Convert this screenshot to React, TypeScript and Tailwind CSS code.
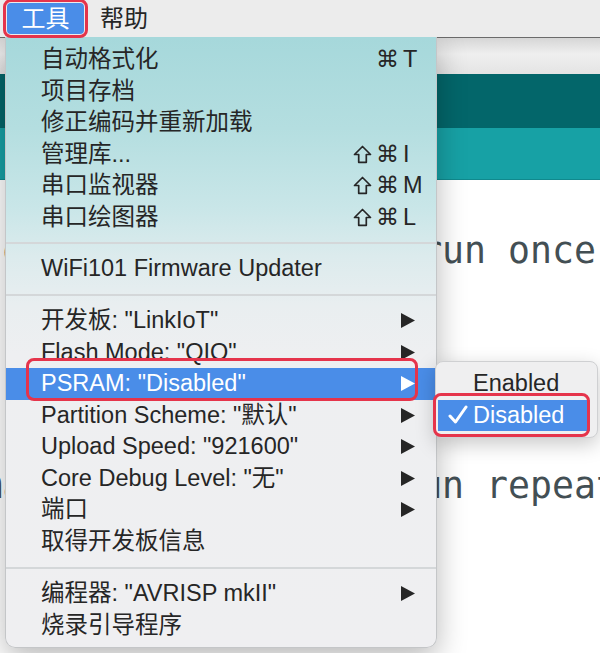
import React from "react";

type Item =
  | { kind: "sep"; h: string }
  | { kind: "row"; label: string; shift?: boolean; keyc?: string; arrow?: boolean; active?: boolean };

const items: Item[] = [
  { kind: "row", label: "自动格式化", keyc: "T" },
  { kind: "row", label: "项目存档" },
  { kind: "row", label: "修正编码并重新加载" },
  { kind: "row", label: "管理库...", shift: true, keyc: "I" },
  { kind: "row", label: "串口监视器", shift: true, keyc: "M" },
  { kind: "row", label: "串口绘图器", shift: true, keyc: "L" },
  { kind: "sep", h: "h-[20px]" },
  { kind: "row", label: "WiFi101 Firmware Updater" },
  { kind: "sep", h: "h-[20.5px]" },
  { kind: "row", label: '开发板: "LinkIoT"', arrow: true },
  { kind: "row", label: 'Flash Mode: "QIO"', arrow: true },
  { kind: "row", label: 'PSRAM: "Disabled"', arrow: true, active: true },
  { kind: "row", label: 'Partition Scheme: "默认"', arrow: true },
  { kind: "row", label: 'Upload Speed: "921600"', arrow: true },
  { kind: "row", label: 'Core Debug Level: "无"', arrow: true },
  { kind: "row", label: "端口", arrow: true },
  { kind: "row", label: "取得开发板信息" },
  { kind: "sep", h: "h-[21px]" },
  { kind: "row", label: '编程器: "AVRISP mkII"', arrow: true },
  { kind: "row", label: "烧录引导程序" },
];

function Arrow() {
  return (
    <svg width="14" height="15" viewBox="0 0 14 15" className="mr-[8px]">
      <path d="M0 0 L14 7.5 L0 15 Z" fill="currentColor" />
    </svg>
  );
}

function ShiftIcon() {
  return (
    <svg width="19" height="19" viewBox="0 0 19 19" className="mr-[4px]">
      <path
        d="M9.5 1.5 L17.5 9.5 L13.3 9.5 L13.3 17.3 L5.7 17.3 L5.7 9.5 L1.5 9.5 Z"
        fill="none"
        stroke="currentColor"
        strokeWidth="1.7"
        strokeLinejoin="round"
      />
    </svg>
  );
}

function Row({ it }: { it: Extract<Item, { kind: "row" }> }) {
  return (
    <div
      className={`flex items-center h-[31.5px] pl-[35px] pr-[13px] ${
        it.active ? "bg-[#4a8de8] text-white" : "text-[#262626]"
      }`}
    >
      <span className="flex-1 whitespace-pre">{it.label}</span>
      {it.keyc && (
        <span className="flex items-center">
          {it.shift && <ShiftIcon />}
          <span className="font-['DejaVu_Sans',sans-serif] text-[23px] leading-none">⌘</span>
          <span className="w-[20px] ml-[4px]">{it.keyc}</span>
        </span>
      )}
      {it.arrow && <Arrow />}
    </div>
  );
}

export default function App() {
  return (
    <div className="relative w-[600px] h-[653px] overflow-hidden bg-white font-['Liberation_Sans','Noto_Sans_CJK_SC',sans-serif] text-[23.5px]">
      {/* macOS menu bar */}
      <div className="relative z-30 flex items-start h-[37px] bg-[#ececec]">
        <div className="ml-[3px] -mt-[1px] w-[85px] h-[39px] rounded-[8px] border-[3px] border-[#e5344b] p-[1px]">
          <div className="h-full rounded-[4px] bg-[#4a8de8] text-white text-[24px] flex items-center justify-center">工具</div>
        </div>
        <div className="ml-[12px] h-[37px] flex items-center text-[#262626] text-[24px]">帮助</div>
      </div>

      {/* Arduino window behind */}
      <div className="border-t border-[#6b6b6b]">
        <div className="h-[36px] bg-[linear-gradient(180deg,#d6d6d6_0%,#efefef_45%,#e4e4e4_100%)]" />
        <div className="h-[54px] bg-[#03666a]" />
        <div className="h-[52px] bg-[#17a1a5] border-b border-[#10898d]" />
        <div className="font-['DejaVu_Sans_Mono',monospace] text-[36.5px] leading-[47px] text-[#434f54] whitespace-pre -ml-[327px]">
          <div>void setup() {"{"}</div>
          <div>  // put your setup code here, to run once:</div>
          <div> </div>
          <div>{"}"}</div>
          <div> </div>
          <div>void loop() {"{"}</div>
          <div>  // put your main code here, to run repeatedly:</div>
          <div> </div>
          <div>{"}"}</div>
        </div>
      </div>

      {/* Dropdown menu */}
      <div className="absolute left-[5px] top-[37px] w-[432px] h-[611px] pt-[7px] rounded-b-[10px] border border-t-0 border-[#c4c6c8] shadow-[0_10px_30px_rgba(0,0,0,0.28)] bg-[linear-gradient(180deg,#a6d8db_0%,#b4dee0_15%,#c9e6e8_28%,#dcebed_36%,#e9eef0_44%,#eeeff1_52%,#efeff1_100%)] overflow-hidden">
        {items.map((it, i) =>
          it.kind === "sep" ? (
            <div key={i} className={`${it.h} flex items-center`}>
              <div className="h-[2px] w-full bg-[#d4d7d9]" />
            </div>
          ) : (
            <Row key={i} it={it} />
          )
        )}
      </div>

      {/* Red annotation around PSRAM */}
      <div className="absolute z-20 left-[26px] top-[358px] w-[392px] h-[43px] rounded-[8px] border-[3px] border-[#e5344b]" />

      {/* Submenu */}
      <div className="absolute z-10 left-[435px] top-[361px] w-[163px] h-[77px] pt-[6px] rounded-[8px] border border-[#cfd0d2] bg-[#efeff0] shadow-[0_6px_20px_rgba(0,0,0,0.22)]">
        <div className="h-[31.5px] flex items-center pl-[37px] text-[#262626]">Enabled</div>
        <div className="h-[31.5px] w-[152px] ml-[2px] flex items-center bg-[#4a8de8] text-white">
          <svg width="20" height="20" viewBox="0 0 20 20" className="ml-[10px] mr-[5px]">
            <path d="M2 11 L7.5 17 L18 2" stroke="white" strokeWidth="3" fill="none" strokeLinecap="round" strokeLinejoin="round" />
          </svg>
          Disabled
        </div>
      </div>

      {/* Red annotation around Disabled */}
      <div className="absolute z-20 left-[433px] top-[393px] w-[157px] h-[44px] rounded-[8px] border-[3px] border-[#e5344b]" />
    </div>
  );
}
